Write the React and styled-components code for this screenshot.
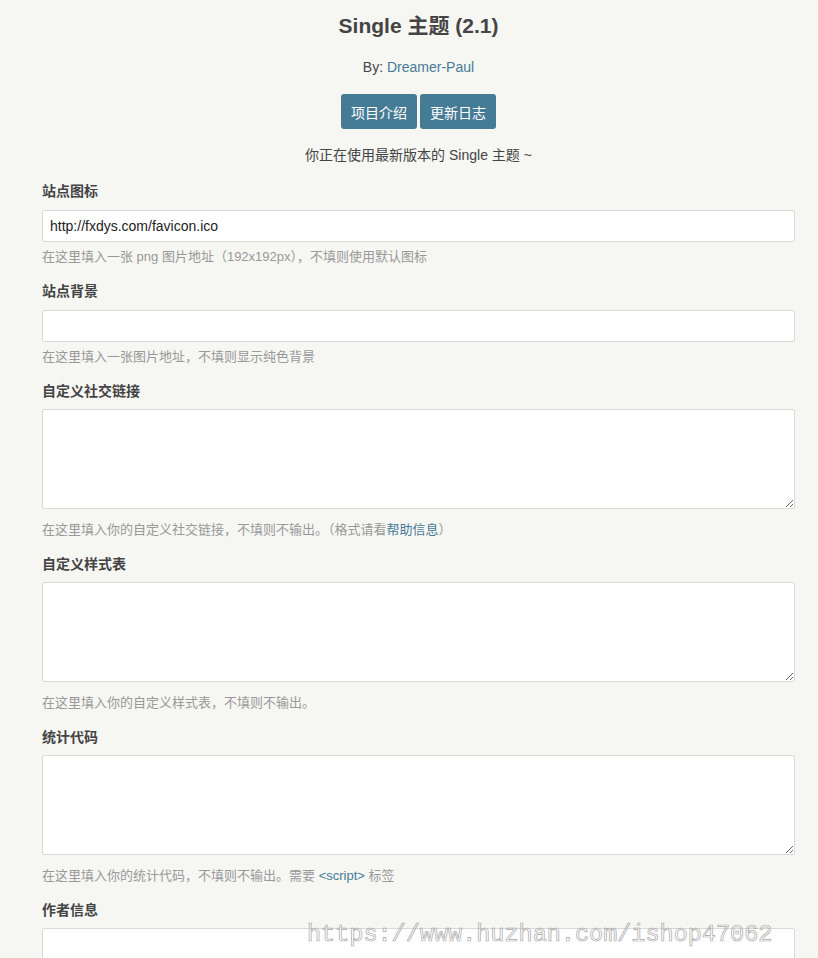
import React from 'react';
import styled, { createGlobalStyle } from 'styled-components';

const GlobalStyle = createGlobalStyle`
  html, body {
    margin: 0;
    padding: 0;
    overflow: hidden;
  }
  body {
    background: #f6f6f3;
    color: #444;
    font-family: "Liberation Sans", Arial, "Noto Sans CJK SC", sans-serif;
    font-size: 14px;
  }
`;

const Page = styled.div`
  position: relative;
  margin: 0 23px 0 42px;
  padding-top: 10px;
`;

const Header = styled.div`
  text-align: center;
`;

const Title = styled.h2`
  margin: 0;
  font-size: 21px;
  line-height: 31px;
  font-weight: bold;
  color: #444;
`;

const Byline = styled.p`
  margin: 16px 0 0;
  line-height: 20px;
`;

const Link = styled.a`
  color: #467b96;
  text-decoration: none;
`;

const Actions = styled.div`
  display: flex;
  justify-content: center;
  gap: 3px;
  margin-top: 17px;
`;

const Button = styled.a`
  display: inline-flex;
  align-items: center;
  height: 35px;
  padding: 0 10px;
  border-radius: 3px;
  background: #467b96;
  color: #fff;
  text-decoration: none;
  font-size: 14px;
`;

const Notice = styled.p`
  margin: 16px 0 0;
  line-height: 20px;
`;

const Form = styled.form`
  margin-top: 16px;
`;

const Field = styled.div`
  margin-bottom: 15px;
`;

const Label = styled.label`
  display: block;
  font-weight: bold;
  line-height: 20px;
  margin-bottom: 9px;
`;

const Input = styled.input`
  display: block;
  box-sizing: border-box;
  width: 100%;
  height: 32px;
  margin: 0;
  padding: 0 7px;
  border: 1px solid #d9d9d6;
  border-radius: 2px;
  background: #fff;
  color: #222;
  font: inherit;
  font-size: 14px;
  outline: none;
`;

const TextArea = styled.textarea`
  display: block;
  box-sizing: border-box;
  width: 100%;
  height: 100px;
  margin: -1px 0 12px;
  padding: 5px 7px;
  border: 1px solid #d9d9d6;
  border-radius: 2px;
  background: #fff;
  color: #222;
  font: inherit;
  outline: none;
`;

const Desc = styled.p`
  margin: 6px 0 0;
  font-size: 13px;
  line-height: 18px;
  color: #999;

  textarea + & {
    margin-top: 0;
  }
`;

const Code = styled.span`
  color: #467b96;
`;

const Watermark = styled.div`
  position: absolute;
  left: 265px;
  top: 921px;
  font-family: "Liberation Mono", "Courier New", monospace;
  font-size: 23.5px;
  line-height: 28px;
  color: transparent;
  -webkit-text-stroke: 0.7px #a8a8a8;
  pointer-events: none;
  white-space: nowrap;
`;

const fields = [
  {
    label: '站点图标',
    value: 'http://fxdys.com/favicon.ico',
    desc: '在这里填入一张 png 图片地址（192x192px），不填则使用默认图标',
  },
  {
    label: '站点背景',
    value: '',
    desc: '在这里填入一张图片地址，不填则显示纯色背景',
  },
  {
    label: '自定义社交链接',
    multi: true,
    desc: (
      <>
        在这里填入你的自定义社交链接，不填则不输出。（格式请看<Link href="#">帮助信息</Link>）
      </>
    ),
  },
  {
    label: '自定义样式表',
    multi: true,
    desc: '在这里填入你的自定义样式表，不填则不输出。',
  },
  {
    label: '统计代码',
    multi: true,
    desc: (
      <>
        在这里填入你的统计代码，不填则不输出。需要 <Code>&lt;script&gt;</Code> 标签
      </>
    ),
  },
  {
    label: '作者信息',
    multi: true,
  },
];

export default function App() {
  return (
    <>
      <GlobalStyle />
      <Page>
        <Header>
          <Title>Single 主题 (2.1)</Title>
          <Byline>
            By: <Link href="#">Dreamer-Paul</Link>
          </Byline>
          <Actions>
            <Button href="#">项目介绍</Button>
            <Button href="#">更新日志</Button>
          </Actions>
          <Notice>你正在使用最新版本的 Single 主题 ~</Notice>
        </Header>

        <Form onSubmit={(e) => e.preventDefault()}>
          {fields.map((f) => (
            <Field key={f.label}>
              <Label>{f.label}</Label>
              {f.multi ? (
                <TextArea />
              ) : (
                <Input type="text" defaultValue={f.value} />
              )}
              {f.desc && <Desc>{f.desc}</Desc>}
            </Field>
          ))}
        </Form>

        <Watermark>https://www.huzhan.com/ishop47062</Watermark>
      </Page>
    </>
  );
}
